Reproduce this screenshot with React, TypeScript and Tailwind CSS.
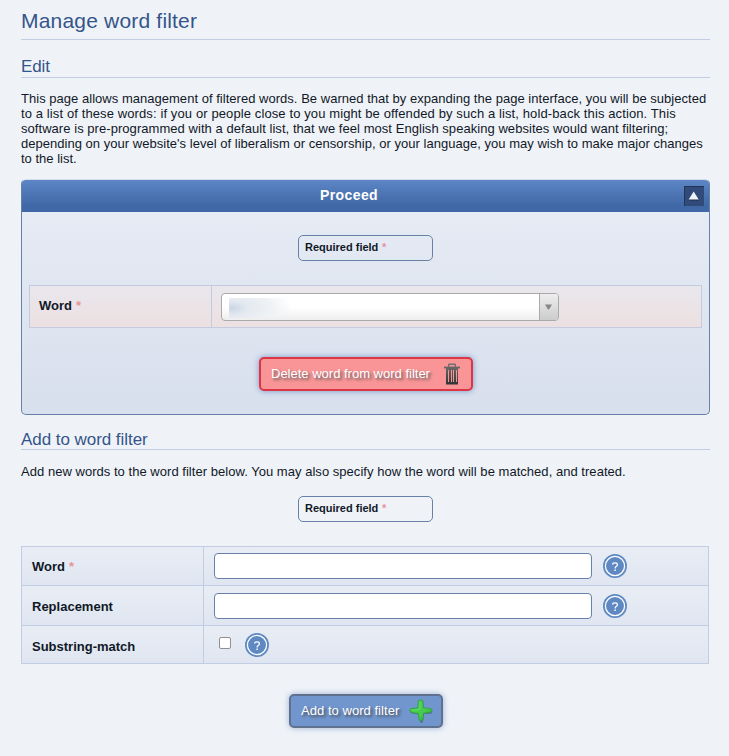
import type { ReactNode } from "react";

function Heading({ children, className }: { children: ReactNode; className: string }) {
  return (
    <h2 className={`border-b border-[#c1cde3] font-normal text-[#35558a] ${className}`}>{children}</h2>
  );
}

function Star() {
  return <span className="ml-[0.5px] font-bold text-[#e8929a]">*</span>;
}

function RequiredField() {
  return (
    <div className="mx-auto h-[26px] w-[135px] rounded-[5px] border border-[#6781a8] pl-1.5 text-[11px] leading-[22px] font-bold">
      Required field <Star />
    </div>
  );
}

function HelpIcon() {
  return (
    <svg width="24" height="24" viewBox="0 0 24 24" className="shrink-0" role="img">
      <circle cx="12" cy="12" r="12" fill="#5f89c2" />
      <circle cx="12" cy="12" r="9.6" fill="none" stroke="#fff" strokeWidth="1.3" />
      <path d="M9.6 10.6Q9.6 8.9 12 8.9Q14.4 8.9 14.4 10.7Q14.4 11.7 13.2 12.5Q12.1 13.2 12.1 14.4" fill="none" stroke="#fff" strokeWidth="1.3" />
      <rect x="11.4" y="15.5" width="1.4" height="1.5" fill="#fff" />
    </svg>
  );
}

function TrashIcon() {
  return (
    <svg width="16" height="22" viewBox="0 0 16 22">
      <defs>
        <linearGradient id="bin" x1="0" y1="0" x2="0" y2="1">
          <stop offset="0" stopColor="#6b6565" />
          <stop offset="1" stopColor="#333" />
        </linearGradient>
      </defs>
      <path fill="#707070" d="M4 4V1.5Q4 .5 5 .5H11Q12 .5 12 1.5V4H10.7V2H5.3V4Z" />
      <path fill="#666" d="M0 3.6H16V5.4H0Z" />
      <path fill="url(#bin)" fillRule="evenodd" d="M2 5H14V21.5H2ZM4 7V19H5V7ZM7 7V19H8V7ZM9 7V19H10V7ZM12 7V19H13V7Z" />
    </svg>
  );
}

function PlusIcon() {
  return (
    <svg width="24" height="24" viewBox="0 0 24 24">
      <defs>
        <linearGradient id="leaf" x1="0" y1="0" x2="1" y2="1">
          <stop offset="0" stopColor="#43d34b" />
          <stop offset=".6" stopColor="#48ca50" />
          <stop offset="1" stopColor="#239331" />
        </linearGradient>
      </defs>
      <path transform="translate(.5 1)" fill="#385878" opacity=".55" d="M9.5 2Q12 -.2 13.7 2L14 9.5Q19 9.4 22 10.5Q24 12.2 21.5 13.7L14 14Q14.2 19 13.5 22Q11.5 24 10 21.5L9.5 14.4Q5 14.2 1.5 13Q-.5 11.2 2 10L9 9.5Q8.7 5 9.5 2Z" />
      <path fill="url(#leaf)" stroke="#2b9f38" strokeWidth=".8" d="M9.6 1.7Q12 0 13.8 1.7L14.4 8.9Q19 8.9 22.4 10Q24 11.7 21.8 13.4L14.4 14.2Q14.4 18 13.8 21Q12 23.2 10.2 20.9L9.2 14.4Q5 14.2 1.6 12.9Q0 11 2 9.6L8.9 9Q8.7 5 9.6 1.7Z" />
      <path d="M11 3L10.7 10.5L3 11" fill="none" stroke="#6fdf70" strokeWidth=".7" />
    </svg>
  );
}

function FormRow({ label, required, height, children }: { label: string; required?: boolean; height: string; children: ReactNode }) {
  return (
    <div className={`flex border-b border-[#c1cde3] bg-linear-to-b from-[#e8edf5] to-[#e0e6f1] ${height}`}>
      <div className={`w-[182px] shrink-0 border-r border-[#c1cde3] pl-2.5 text-[13px] leading-[15px] font-bold ${required ? "pt-3" : "pt-[13px]"}`}>
        {label} {required && <Star />}
      </div>
      <div className="flex grow items-start pl-2.5">{children}</div>
    </div>
  );
}

function TextInput() {
  return <input type="text" className="mt-1.5 mr-[11px] h-[26px] w-[378px] rounded-[4px] border border-[#6781a8] bg-white" />;
}

export default function App() {
  return (
    <main className="h-[756px] w-[729px] overflow-hidden bg-[#eff3f8] pr-[19px] pl-[21px] font-['Liberation_Sans',Arial,sans-serif] text-[13px] leading-[15px] text-[#111827]">
      <h1 className="h-10 border-b border-[#c1cde3] pt-[9px] text-[21px] leading-6 tracking-[0.19px] text-[#35558a]">Manage word filter</h1>
      <Heading className="h-[38px] pt-[17px] text-[17px] leading-5 tracking-[-0.1px]">Edit</Heading>
      <p className="mt-[13px] -mr-2 h-[75px] whitespace-nowrap">
        <span className="tracking-[0.026px]">This page allows management of filtered words. Be warned that by expanding the page interface, you will be subjected</span><br />
        <span className="tracking-[0.11px]">to a list of these words: if you or people close to you might be offended by such a list, hold-back this action. This</span><br />
        <span className="tracking-[0.05px]">software is pre-programmed with a default list, that we feel most English speaking websites would want filtering;</span><br />
        <span className="tracking-[0.026px]">depending on your website's level of liberalism or censorship, or your language, you may wish to make major changes</span><br />
        to the list.
      </p>

      <section className="mt-[13px] h-[236px] overflow-hidden rounded-[5px] border border-t-[#d7e0ea] border-[#6781a8] bg-linear-to-b from-[#e8edf5] to-[#d8dfed]">
        <header className="grid h-8 grid-cols-[1fr_auto_1fr] bg-linear-to-b from-[#5c86c6] to-[#4168a6] to-80% text-white">
          <h3 className="col-start-2 pt-[7px] pr-[33px] text-[14px] leading-4 font-bold tracking-[0.4px]">Proceed</h3>
          <button className="mt-1.5 mr-[5px] flex h-5 w-5 items-center justify-center justify-self-end border-t border-l border-[#203557] bg-[#304b79]">
            <svg width="12" height="10" viewBox="0 0 12 10" className="-mt-0.5 mr-px">
              <path d="M1 9.5H11L6 2Z" fill="#1b2d49" />
              <path d="M.7 8.5H10.7L5.7 .5Z" fill="#eff3f8" />
            </svg>
          </button>
        </header>
        <div className="pt-[23px]">
          <RequiredField />
        </div>
        <div className="mt-6 ml-[7px] flex h-[43px] w-[673px] border border-[#c4cae0] bg-linear-to-b from-[#e9e7ed] to-[#ece0e1]">
          <div className="w-[182px] border-r border-[#c4cae0] pt-3 pl-[9px] font-bold">Word <Star /></div>
          <div className="pt-[7px] pl-[9px]">
            <div className="flex h-7 w-[338px] overflow-hidden rounded-[4px] border border-[#aaa] bg-linear-to-b from-white from-50% to-[#eee]">
              <div className="grow pt-1 pl-[7px]">
                <div className="h-5 w-[66px] bg-[radial-gradient(ellipse_60px_28px_at_3px_10px,#cbd5e3_0%,#e3e9f0_25%,#eff2f5_65%,transparent_100%)]" />
              </div>
              <div className="flex w-[19px] items-center justify-center border-l border-[#aaa] bg-linear-to-b from-[#eee] to-[#ccc]">
                <svg width="7" height="6" viewBox="0 0 7 6" className="mr-0.5"><path d="M0 .5H7L4 5.5H3Z" fill="#888" /></svg>
              </div>
            </div>
          </div>
        </div>
        <button className="mt-[29px] ml-[237px] flex h-[34px] w-[214px] items-center rounded-[5px] border-2 border-[#dc3545] bg-[#fa9597] pl-2.5 text-left text-white shadow-[0_0_6px_#7898c4] [text-shadow:2px_2px_3px_#555]">
          <span className="w-[173px] pb-0.5">Delete word from word filter</span><TrashIcon />
        </button>
      </section>

      <Heading className="h-[35px] pt-[15px] text-[17px] leading-5 tracking-[-0.05px]">Add to word filter</Heading>
      <p className="mt-[14px] mb-[17px] tracking-[0.034px]">Add new words to the word filter below. You may also specify how the word will be matched, and treated.</p>
      <RequiredField />

      <div className="mt-6 w-[688px] border border-b-0 border-[#c1cde3]">
        <FormRow label="Word" required height="h-[39px]"><TextInput /><span className="mt-[7px]"><HelpIcon /></span></FormRow>
        <FormRow label="Replacement" height="h-10"><span className="pt-px"><TextInput /></span><span className="mt-2"><HelpIcon /></span></FormRow>
        <FormRow label="Substring-match" height="h-[38px]">
          <input type="checkbox" className="mt-[11px] ml-[5px] h-3 w-3 appearance-none rounded-[2px] border border-[#8f8f8f] bg-white" />
          <span className="mt-[7px] ml-[14px]"><HelpIcon /></span>
        </FormRow>
      </div>

      <button className="mt-[30px] ml-[268px] flex h-[34px] w-[154px] items-center rounded-[5px] border-2 border-[#60708f] bg-[#7196ce] pl-2.5 text-left text-white shadow-[0_0_6px_#9cafd0] [text-shadow:2px_2px_3px_#444]">
        <span className="w-[108px] pb-0.5 tracking-[0.04px]">Add to word filter</span><PlusIcon />
      </button>
    </main>
  );
}
